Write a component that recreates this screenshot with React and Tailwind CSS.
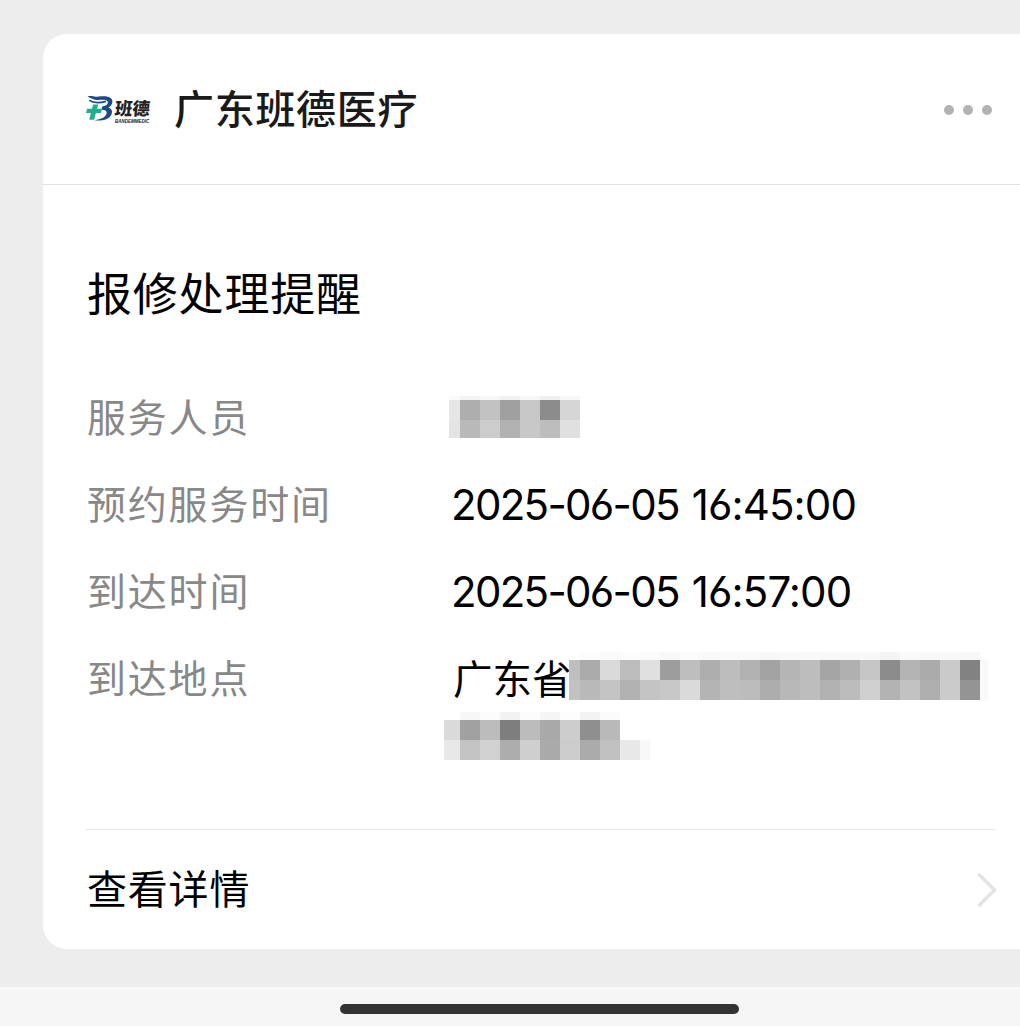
const MOSAICS = {
  staff: {
    lead: 11,
    rows: [
      { h: 4, cells: ['#fafafa', '#f3f3f3', '#f7f7f7', '#f1f1f1', '#f7f7f7', '#efefef', '#f7f7f7'] },
      { h: 20, cells: ['#e6e6e6', '#aeaeae', '#c2c2c2', '#9f9f9f', '#c8c8c8', '#8c8c8c', '#d6d6d6'] },
      { h: 18, cells: ['#e4e4e4', '#b9b9b9', '#cccccc', '#b1b1b1', '#c8c8c8', '#bdbdbd', '#e0e0e0'] },
    ],
  },
  place: {
    lead: 11,
    rows: [
      { h: 8, cells: ['#ffffff', '#fcfcfc', '#fafafa', '#fcfcfc', '#fbfbfb', '#f8f8f8', '#fbfbfb', '#f9f9f9', '#fafafa', '#fafafa', '#f7f7f7', '#f8f8f8', '#f9f9f9', '#f8f8f8', '#f8f8f8', '#f8f8f8', '#f5f5f5', '#fafafa', '#f8f8f8', '#f8f8f8', '#f7f7f7', '#ffffff'] },
      { h: 20, cells: ['#bfbfbf', '#ababab', '#dadada', '#bdbdbd', '#e0e0e0', '#9d9d9d', '#bebebe', '#aeaeae', '#bdbdbd', '#b2b2b2', '#a3a3a3', '#b5b5b5', '#bdbdbd', '#a5a5a5', '#b0b0b0', '#c6c6c6', '#8c8c8c', '#b4b4b4', '#ababab', '#cacaca', '#828282', '#f9f9f9'] },
      { h: 20, cells: ['#c2c2c2', '#b9b9b9', '#c4c4c4', '#b1b1b1', '#c4c4c4', '#c8c8c8', '#dadada', '#b4b4b4', '#bebebe', '#bcbcbc', '#adadad', '#b8b8b8', '#bdbdbd', '#b2b2b2', '#bcbcbc', '#d0d0d0', '#b3b3b3', '#c2c2c2', '#afafaf', '#cbcbcb', '#949494', '#f9f9f9'] },
    ],
  },
  placeEnd: {
    lead: 16,
    rows: [
      { h: 8, cells: ['#ffffff', '#f7f7f7', '#fcfcfc', '#f2f2f2', '#fcfcfc', '#f5f5f5', '#fdfdfd', '#f3f3f3', '#fbfbfb', '#ffffff', '#ffffff'] },
      { h: 20, cells: ['#dadada', '#a1a1a1', '#bcbcbc', '#7e7e7e', '#bcbcbc', '#a9a9a9', '#cdcdcd', '#8f8f8f', '#b9b9b9', '#ffffff', '#ffffff'] },
      { h: 20, cells: ['#e8e8e8', '#c3c3c3', '#d2d2d2', '#adadad', '#cfcfcf', '#aaaaaa', '#cccccc', '#ababab', '#c1c1c1', '#e8e8e8', '#f8f8f8'] },
    ],
  },
};

const Mosaic = ({ data, tail = 20 }) => (
  <div className="flex shrink-0 flex-col">
    {data.rows.map((row, i) => (
      <div className="flex" key={i} style={{ height: row.h }}>
        {row.cells.map((color, j) => (
          <span
            key={j}
            className="block shrink-0"
            style={{
              width: j === 0 ? data.lead : j === row.cells.length - 1 ? tail : 20,
              backgroundColor: color,
            }}
          />
        ))}
      </div>
    ))}
  </div>
);

const Logo = () => (
  <div className="flex h-[30px] w-[68px] shrink-0 items-start">
    <svg className="mt-px h-[28px] w-[29px] shrink-0" viewBox="0 0 29 28" fill="none">
      <path d="M2.5 1.2C7 0.2 10 2 14 1.6C20 0.4 27.6 1.4 27.4 6.6C27.3 9.6 25.6 11.6 23.4 12.4C26.4 13.2 27.6 15.6 26.8 18.4C25.2 24 18.5 25.9 9.5 25.4C16 24.2 20.8 22.4 21.6 18.6C22.2 15.6 19.6 14.8 16.4 14.8L17.4 11.2C20.6 11.2 22.6 10 22.9 7.6C23.1 4.8 18 4.6 13.6 5C9 5.4 6 3.2 2.5 1.2Z" fill="#1b4a87" />
      <path d="M4.2 5.4C8.5 8.2 13 8.6 21 6.4" stroke="#1b4a87" strokeWidth="1.7" />
      <path d="M8.2 9.4H13.2L12 13.8H17L15.9 18H10.9L9.2 24.4C7.6 25 6 24.9 4.2 24.4L5.9 18H1L2.1 13.8H7Z" fill="#1fae8e" />
    </svg>
    <div className="ml-px flex flex-col font-['Noto_Sans_CJK_SC',sans-serif] text-[#222]">
      <span className="mt-[5px] h-[20px] -skew-x-6 whitespace-nowrap text-[17.5px] leading-[18px] font-black">班德</span>
      <span className="h-[5px] whitespace-nowrap font-['Liberation_Sans',sans-serif] text-[4.5px] leading-[5px] font-bold italic">BANDEMMEDIC</span>
    </div>
  </div>
);

const Row = ({ label, children }) => (
  <div className="flex h-[87px] items-center">
    <span className="w-[366px] shrink-0 pb-[4px] text-[39px] tracking-[1.8px] text-[#888]">{label}</span>
    {children}
  </div>
);

const Time = ({ date, time }) => (
  <span className="-ml-[2px] flex gap-[13px] whitespace-nowrap font-['Inter',sans-serif] text-[42px] font-normal [font-feature-settings:'cv03']">
    <span className="tracking-[-1.7px]">{date}</span>
    <span className="tracking-[-0.9px]">{time}</span>
  </span>
);

export default function App() {
  return (
    <div className="flex h-[1026px] w-[1020px] flex-col overflow-hidden bg-[#ededed] pt-[34px] font-['Noto_Sans_CJK_SC',sans-serif] text-[40px] leading-none text-black">
      <div className="ml-[43px] flex h-[915px] shrink-0 flex-col rounded-l-[24px] bg-white">
        {/* Cuenta */}
        <div className="flex h-[151px] shrink-0 items-center border-b border-[#e2e2e2] pr-[28px] pl-[42px]">
          <Logo />
          <h1 className="ml-[21px] flex-1 pb-[5px] font-medium tracking-[0.7px] text-[#1a1a1a]">广东班德医疗</h1>
          <div className="mt-px flex gap-[9px]">
            <i className="size-[10px] rounded-full bg-[#b2b2b2]" />
            <i className="size-[10px] rounded-full bg-[#b2b2b2]" />
            <i className="size-[10px] rounded-full bg-[#b2b2b2]" />
          </div>
        </div>

        <div className="flex h-[644px] shrink-0 flex-col pl-[44px]">
          <h2 className="mt-[84px] h-[46px] text-[45px] leading-[46px] tracking-[0.8px]">报修处理提醒</h2>
          <div className="mt-[59px]">
            <Row label="服务人员">
              <div className="-mt-[2px] -ml-[4px]">
                <Mosaic data={MOSAICS.staff} />
              </div>
            </Row>
            <Row label="预约服务时间">
              <Time date="2025-06-05" time="16:45:00" />
            </Row>
            <Row label="到达时间">
              <Time date="2025-06-05" time="16:57:00" />
            </Row>
            <Row label="到达地点">
              <span className="w-[116px] shrink-0 pb-[4px] whitespace-nowrap text-[39.5px]">广东省</span>
              <div className="relative -mt-[6px]">
                <Mosaic data={MOSAICS.place} tail={8} />
              </div>
            </Row>
            <div className="-mt-[10px] ml-[357px]">
              <Mosaic data={MOSAICS.placeEnd} tail={10} />
            </div>
          </div>
        </div>

        {/* Ver detalles */}
        <div className="mr-[25px] ml-[43px] border-t border-[#e8e8e8]" />
        <div className="flex flex-1 items-center justify-between pr-[22px] pl-[44px]">
          <span className="pb-[5px] tracking-[0.8px]">查看详情</span>
          <svg className="h-[36px] w-[22px]" viewBox="0 0 22 36" fill="none">
            <path d="M2.5 2L18.5 18L2.5 34" stroke="#e3e3e3" strokeWidth="3.4" />
          </svg>
        </div>
      </div>

      <div className="mt-[38px] flex flex-1 justify-center border-t-2 border-[#f9f9f9] bg-[#f6f6f6] pl-[59px]">
        <div className="mt-[15px] h-[10px] w-[399px] rounded-full bg-[#333]" />
      </div>
    </div>
  );
}
